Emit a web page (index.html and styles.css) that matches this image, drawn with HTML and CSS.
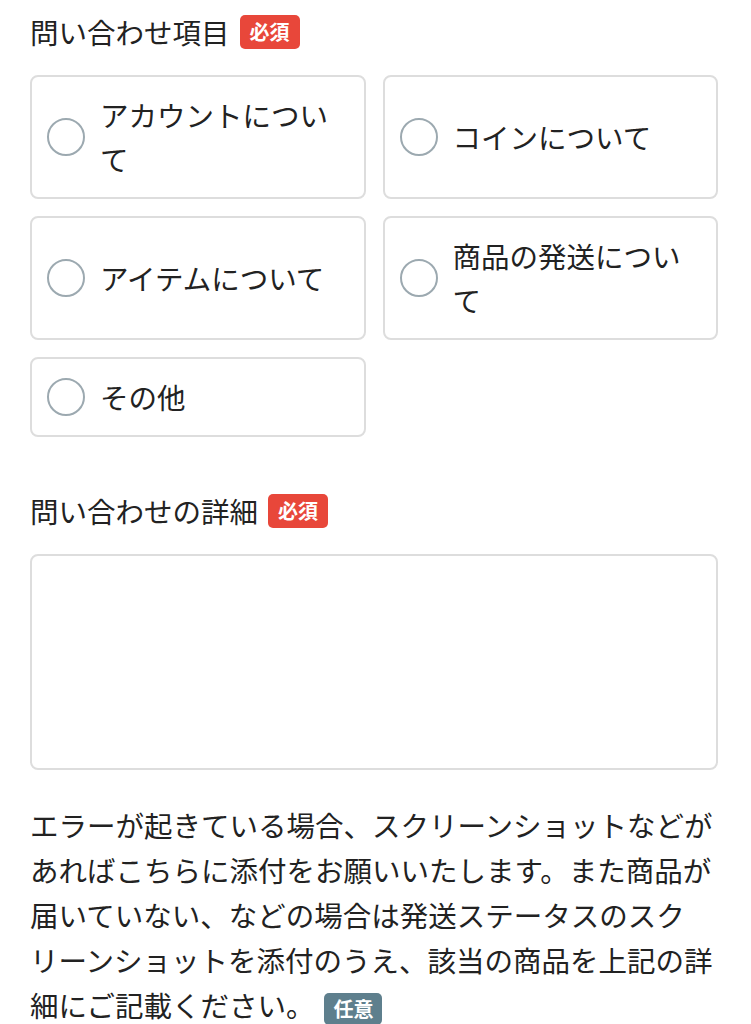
FILE: index.html
```html
<!DOCTYPE html>
<html lang="ja">
<head>
<meta charset="utf-8">
<link rel="stylesheet" href="styles.css">
</head>
<body>
<div class="form">
  <div class="label-row first">
    <span class="label">問い合わせ項目</span><span class="badge req">必須</span>
  </div>
  <div class="options">
    <label class="option"><span class="radio"></span><span class="opt-text">アカウントについて</span></label>
    <label class="option"><span class="radio"></span><span class="opt-text">コインについて</span></label>
    <label class="option"><span class="radio"></span><span class="opt-text">アイテムについて</span></label>
    <label class="option"><span class="radio"></span><span class="opt-text">商品の発送について</span></label>
    <label class="option"><span class="radio"></span><span class="opt-text">その他</span></label>
  </div>
  <div class="label-row second">
    <span class="label">問い合わせの詳細</span><span class="badge req">必須</span>
  </div>
  <div class="textarea"></div>
  <p class="note">エラーが起きている場合、スクリーンショットなどがあればこちらに添付をお願いいたします。また商品が届いていない、などの場合は発送ステータスのスクリーンショットを添付のうえ、該当の商品を上記の詳細にご記載ください。<span class="badge opt">任意</span></p>
</div>
</body>
</html>
```
FILE: styles.css
```css
html, body {
  margin: 0;
  padding: 0;
  background: #ffffff;
}
body {
  font-family: "Noto Sans CJK JP", "Noto Sans", sans-serif;
  color: #222222;
}
.form {
  width: 688px;
  margin-left: 30px;
}
.label-row {
  display: flex;
  align-items: center;
  gap: 10px;
  height: 34px;
}
.label-row.first {
  margin-top: 15px;
}
.label-row.second {
  margin-top: 57px;
}
.label {
  font-size: 28.5px;
  line-height: 34px;
}
.badge {
  display: inline-flex;
  align-items: center;
  justify-content: center;
  width: 60px;
  height: 34px;
  border-radius: 5px;
  color: #ffffff;
  font-size: 20px;
  font-weight: 700;
  line-height: 1;
}
.badge.req {
  background: #e8473a;
}
.badge.opt {
  background: #5e7f8d;
  width: 58px;
  height: 32px;
  margin-left: 10px;
  vertical-align: baseline;
}
.options {
  margin-top: 26px;
  display: grid;
  grid-template-columns: 1fr 1fr;
  column-gap: 17px;
  row-gap: 17px;
}
.option {
  display: flex;
  align-items: center;
  border: 2px solid #dddddd;
  border-radius: 8px;
  padding: 16px 20px 16px 15px;
}
.radio {
  flex: none;
  width: 34px;
  height: 34px;
  border: 2px solid #9ca9b0;
  border-radius: 50%;
  margin-right: 15px;
}
.opt-text {
  font-size: 28.5px;
  line-height: 44px;
}
.textarea {
  margin-top: 26px;
  height: 212px;
  border: 2px solid #dddddd;
  border-radius: 8px;
}
.note {
  margin: 32px 0 0 0;
  font-size: 28.5px;
  line-height: 45px;
  line-break: strict;
}
```
